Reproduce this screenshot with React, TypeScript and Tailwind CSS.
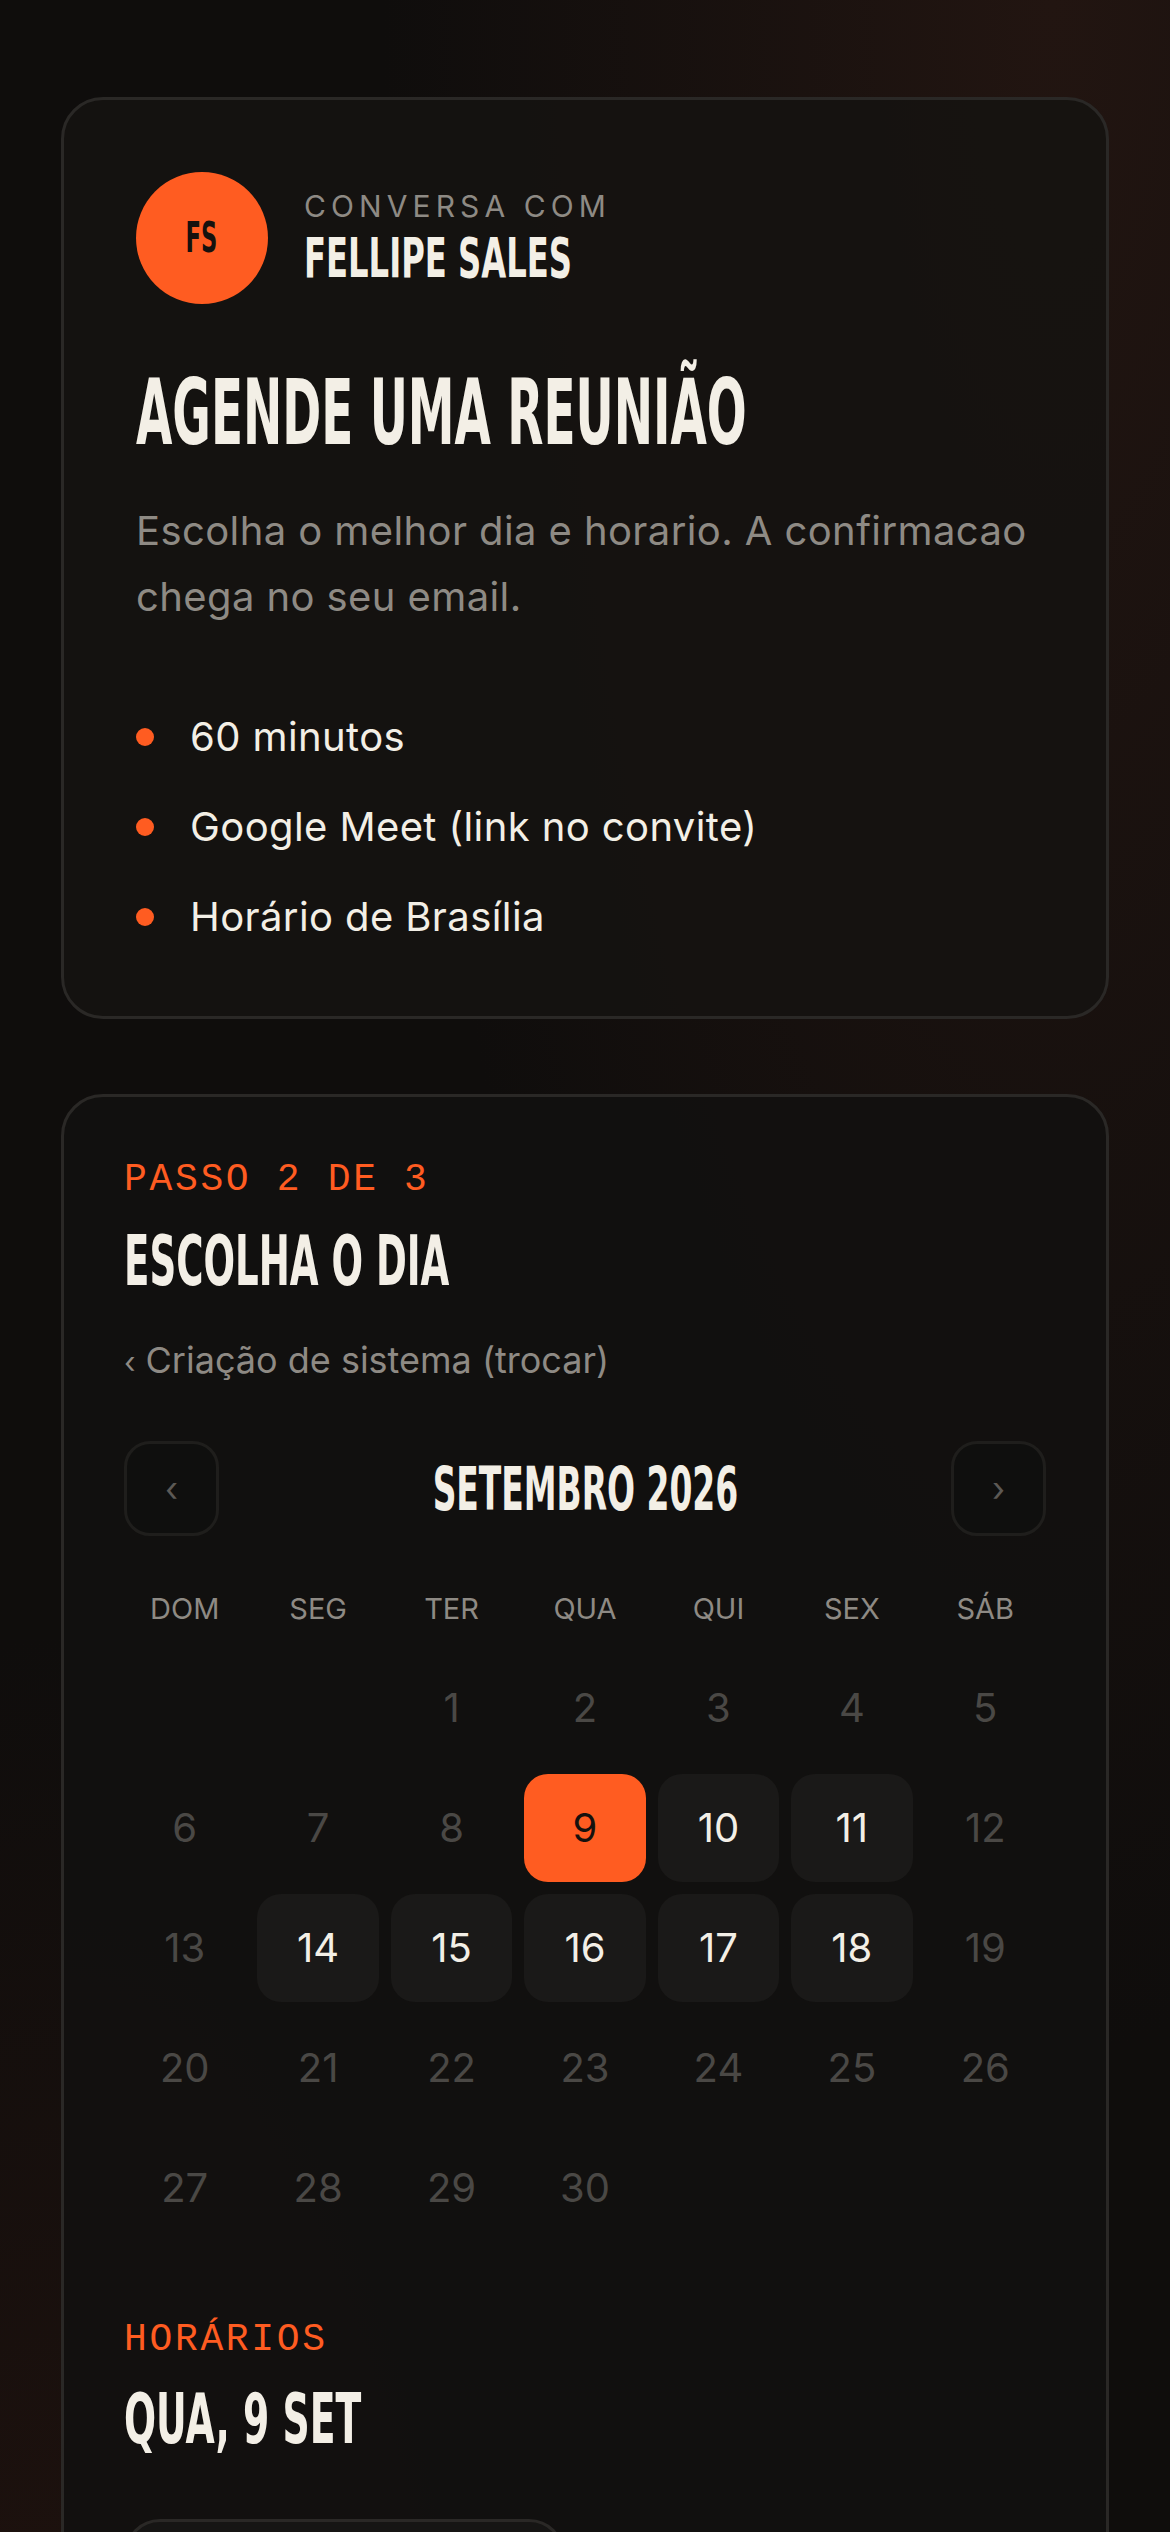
const display =
  "font-['Liberation_Sans_Narrow','DejaVu_Sans_Condensed','Roboto_Condensed',sans-serif] font-bold uppercase leading-none";
const body = "font-['Inter','Noto_Sans',sans-serif]";
const mono = "font-['Liberation_Mono','DejaVu_Sans_Mono',monospace]";

const weekdays = ["DOM", "SEG", "TER", "QUA", "QUI", "SEX", "SÁB"];
const available = [10, 11, 14, 15, 16, 17, 18];
const selected = 9;

const days: (number | null)[] = [null, null, ...Array.from({ length: 30 }, (_, i) => i + 1)];

const perks = ["60 minutos", "Google Meet (link no convite)", "Horário de Brasília"];

function DayCell({ day }: { day: number | null }) {
  if (day === null) return <div className="h-[108px]" />;
  if (day === selected) {
    return (
      <div className="h-[108px] rounded-[24px] bg-[#ff5c21] flex items-center justify-center text-[40px] text-[#16110e]">
        {day}
      </div>
    );
  }
  if (available.includes(day)) {
    return (
      <div className="h-[108px] rounded-[24px] bg-[#1a1918] flex items-center justify-center text-[40px] text-[#f3efe6]">
        {day}
      </div>
    );
  }
  return (
    <div className="h-[108px] flex items-center justify-center text-[40px] text-[#4a4845]">
      {day}
    </div>
  );
}

export default function App() {
  return (
    <div
      className={`${body} min-h-screen bg-[#0f0d0c] bg-[radial-gradient(ellipse_at_90%_0%,#221511_0%,transparent_45%),radial-gradient(ellipse_at_5%_100%,#26140f_0%,transparent_35%)] px-[61px] pt-[97px] pb-[120px]`}
    >
      {/* intro card */}
      <section className="rounded-[42px] border-[3px] border-[#2a2826] bg-[#151311]/90 p-[72px]">
        <div className="flex items-center gap-[36px]">
          <div className="w-[132px] h-[132px] rounded-full bg-[#ff5c21] flex items-center justify-center">
            <span className={`${display} inline-block text-[42px] text-[#16110e] scale-x-[0.6]`}>FS</span>
          </div>
          <div className="flex flex-col gap-[9px]">
            <span className="text-[30px] leading-none tracking-[0.17em] text-[#8e8a84]">CONVERSA COM</span>
            <span className={`${display} inline-block origin-left whitespace-nowrap text-[56px] text-[#f3efe6] scale-x-[0.64]`}>
              Fellipe Sales
            </span>
          </div>
        </div>

        <h1 className={`${display} mt-[64px] inline-block origin-left whitespace-nowrap text-[90px] text-[#f3efe6] scale-x-[0.58]`}>
          Agende uma reunião
        </h1>

        <p className="mt-[40px] text-[40px] leading-[66px] tracking-[0.01em] text-[#8e8a84]">
          Escolha o melhor dia e horario. A confirmacao chega no seu email.
        </p>

        <ul className="mt-[80px] flex flex-col gap-[36px]">
          {perks.map((p) => (
            <li key={p} className="flex items-center gap-[36px] text-[40px] leading-[54px] tracking-[0.01em] text-[#f3efe6]">
              <span className="w-[18px] h-[18px] rounded-full bg-[#ff5c21] shrink-0" />
              {p}
            </li>
          ))}
        </ul>
      </section>

      {/* calendar card */}
      <section className="mt-[75px] rounded-[42px] border-[3px] border-[#2a2826] bg-[#121110]/90 p-[60px]">
        <div className={`${mono} text-[38px] leading-[46px] tracking-[0.07em] text-[#ff5c21]`}>PASSO 2 DE 3</div>
        <h2 className={`${display} mt-[23px] inline-block origin-left whitespace-nowrap text-[70px] text-[#f3efe6] scale-x-[0.59]`}>
          Escolha o dia
        </h2>
        <div className="mt-[46px] text-[36px] leading-none text-[#8e8a84]">
          <span className="text-[30px] mr-[10px]">‹</span>Criação de sistema (trocar)
        </div>

        <div className="mt-[63px] flex items-center justify-between">
          <button className="w-[95px] h-[95px] rounded-[26px] border-[3px] border-[#1f1e1c] bg-[#0f0f0e] flex items-center justify-center text-[34px] text-[#5c5955]">
            ‹
          </button>
          <span className={`${display} inline-block whitespace-nowrap text-[60px] text-[#f3efe6] scale-x-[0.61]`}>
            Setembro 2026
          </span>
          <button className="w-[95px] h-[95px] rounded-[26px] border-[3px] border-[#1f1e1c] bg-[#0f0f0e] flex items-center justify-center text-[34px] text-[#5c5955]">
            ›
          </button>
        </div>

        <div className="mt-[57px] grid grid-cols-7 gap-x-[12px]">
          {weekdays.map((w) => (
            <div key={w} className="text-center text-[29px] leading-[32px] text-[#8e8a84]">
              {w}
            </div>
          ))}
        </div>

        <div className="mt-[29px] grid grid-cols-7 gap-[12px]">
          {days.map((d, i) => (
            <DayCell key={i} day={d} />
          ))}
        </div>

        <div className={`${mono} mt-[75px] text-[38px] leading-[46px] tracking-[0.07em] text-[#ff5c21]`}>HORÁRIOS</div>
        <h3 className={`${display} mt-[21px] inline-block origin-left whitespace-nowrap text-[70px] text-[#f3efe6] scale-x-[0.6]`}>
          Qua, 9 set
        </h3>

        <div className="mt-[65px] flex flex-col gap-[18px] w-[441px]">
          {["09:00", "10:30", "14:00", "15:30"].map((t) => (
            <div
              key={t}
              className="h-[120px] rounded-[36px] border-[3px] border-[#2a2826] bg-[#161514] flex items-center justify-center text-[40px] text-[#f3efe6]"
            >
              {t}
            </div>
          ))}
        </div>
      </section>
    </div>
  );
}
